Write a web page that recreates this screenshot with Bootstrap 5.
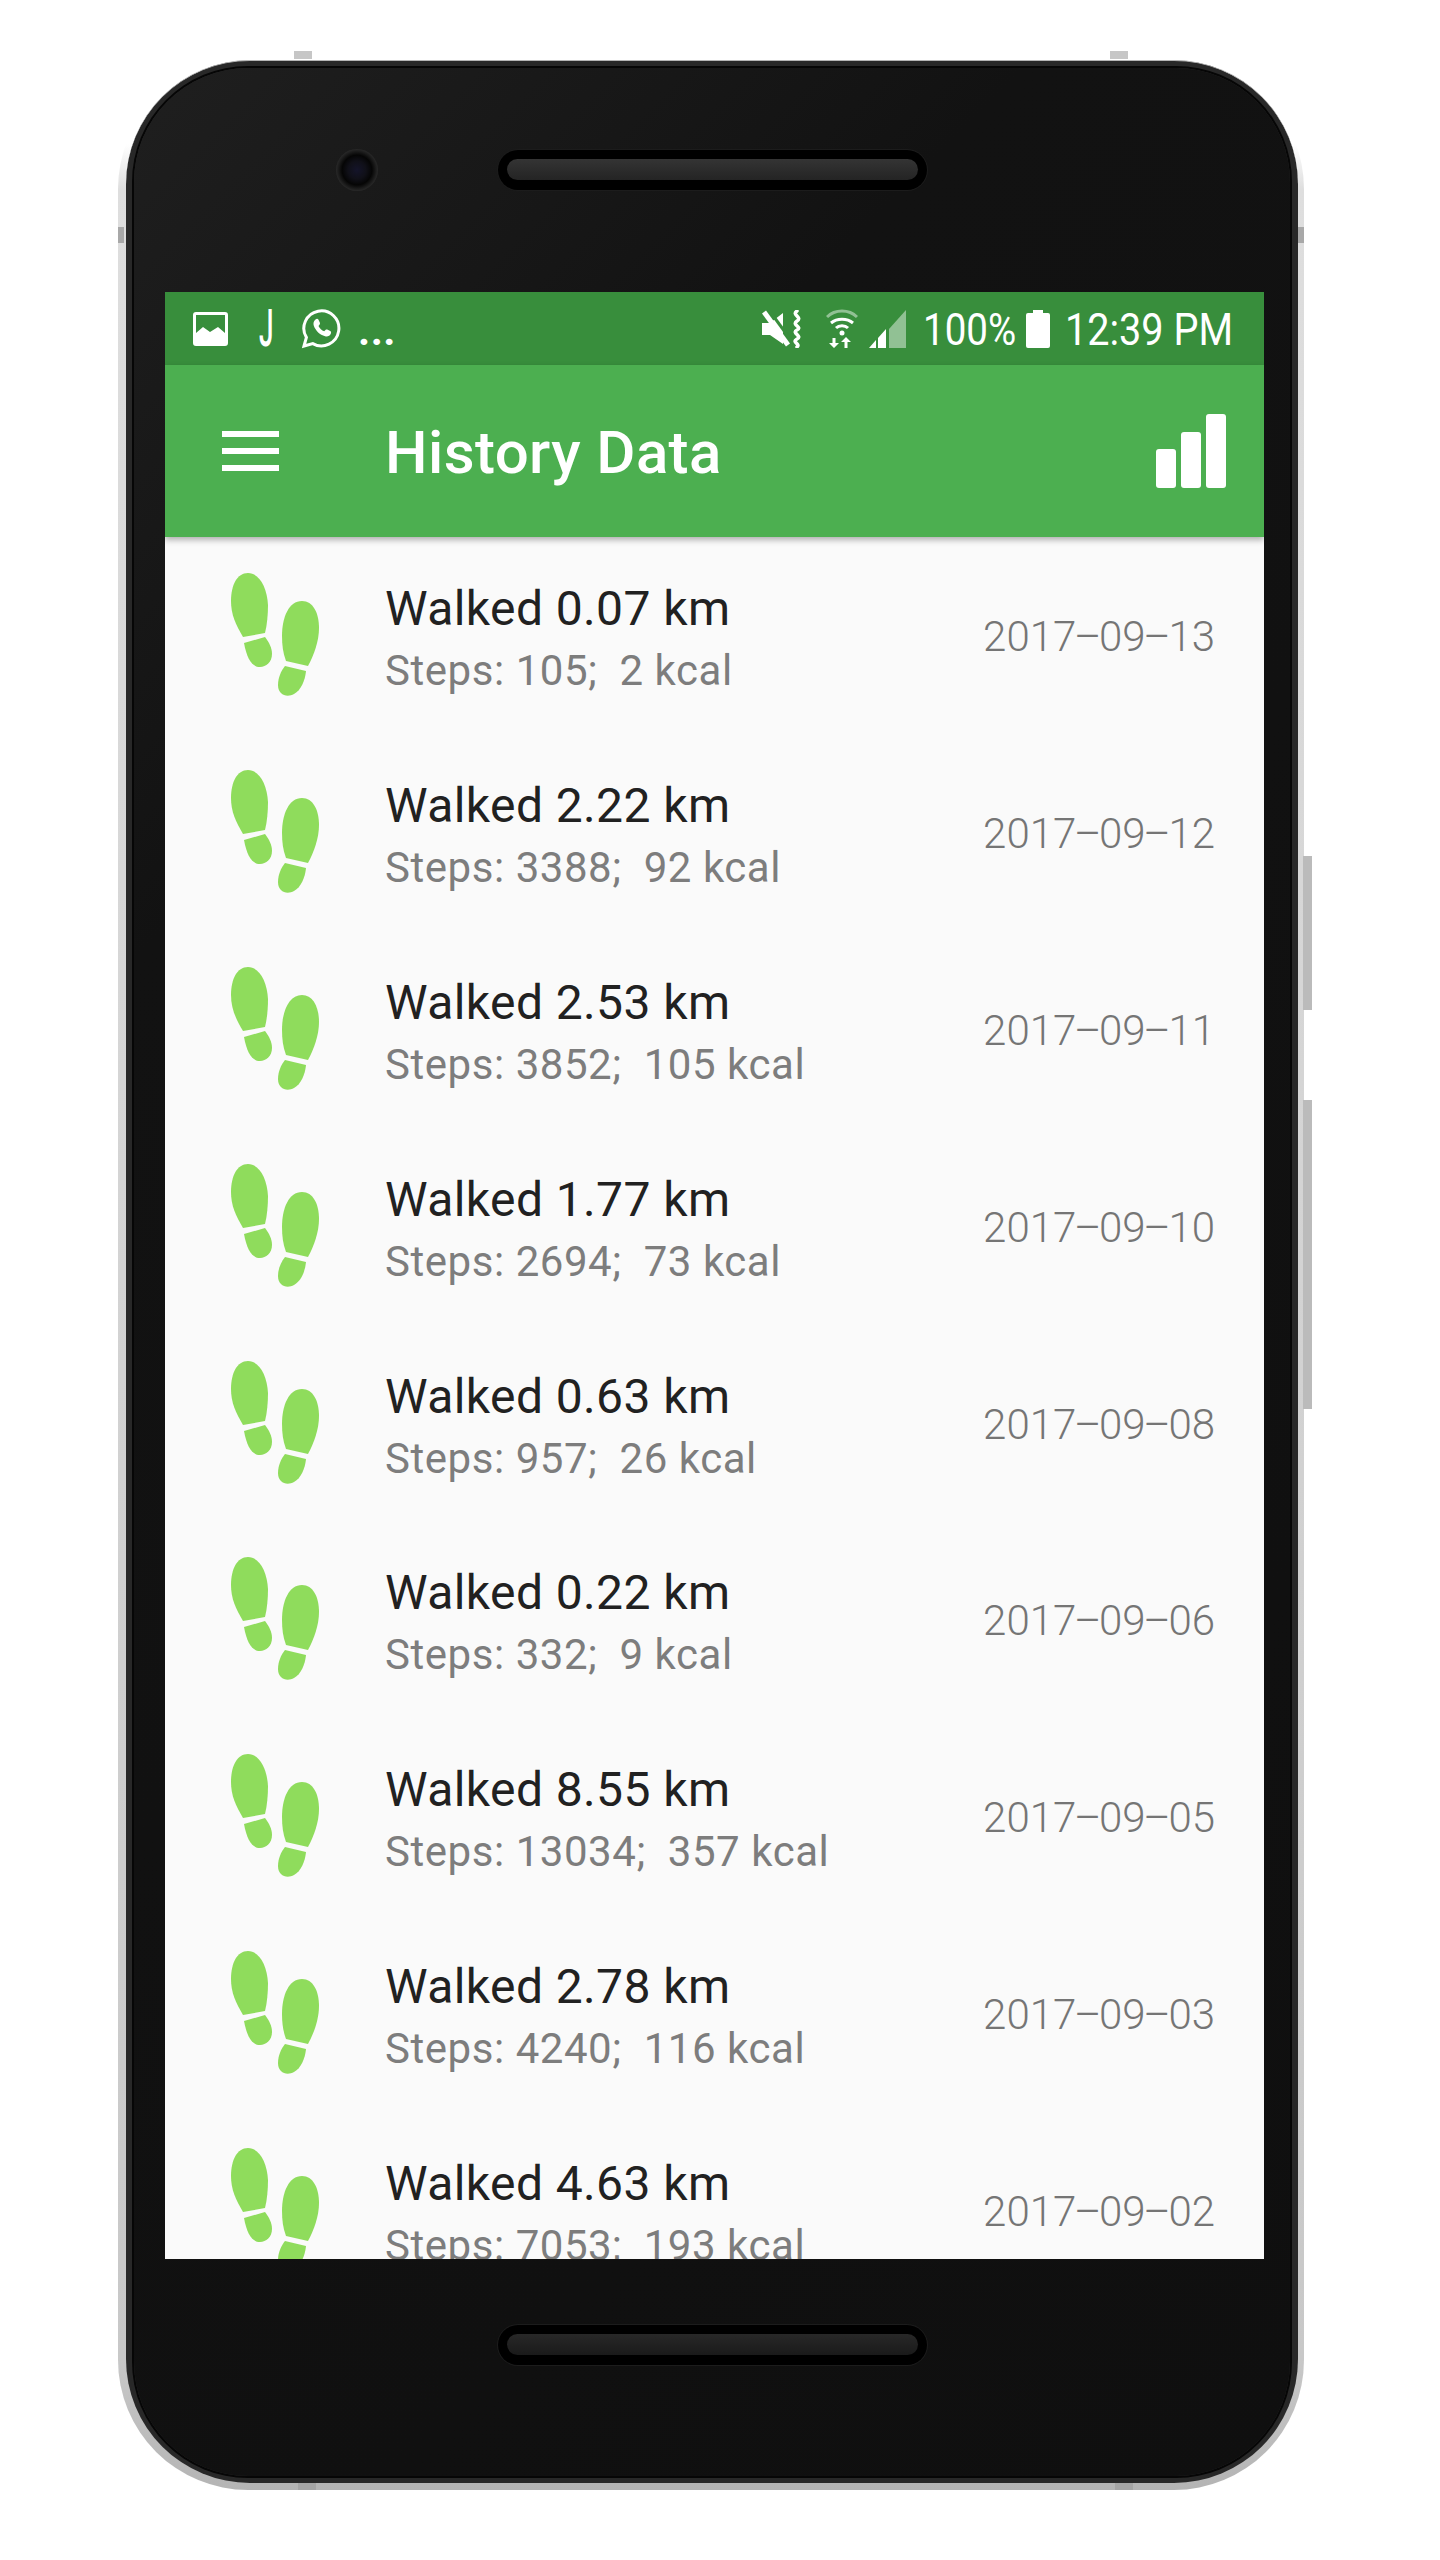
<!DOCTYPE html>
<html lang="en">
<head>
  <meta charset="UTF-8">
  <meta name="viewport" content="width=device-width, initial-scale=1.0">
  <title>History Data</title>
  <link href="https://cdn.jsdelivr.net/npm/bootstrap@5.3.0/dist/css/bootstrap.min.css" rel="stylesheet">
  <style>
    body {
      background: #fff;
      font-family: Roboto, "Liberation Sans", sans-serif;
    }
    /* phone body */
    .phone-shell {
      position: relative;
      width: 1186px;
      height: 2431px;
      margin: 59px 0 0 118px;
      padding: 1px 6px 7px 8px;
      border-radius: 130px;
      background: linear-gradient(to bottom, #fff 0, #fff 85px, #dedede 130px, #c8c8c8 2300px, #b4b4b4 100%);
    }
    .phone-rim {
      height: 100%;
      padding: 7px 8px 7px 8px;
      border-radius: 124px;
      border-top: 1px solid #b5b5b5;
      background: #282828;
    }
    .phone-face {
      height: 100%;
      padding: 0 26px 0 31px;
      border-radius: 114px;
      background: linear-gradient(135deg, #1f1f1f 0, #121212 25%, #0f0f0f 100%);
      box-shadow: 0 0 0 2px #060606;
    }
    .bezel-top { height: 224px; padding: 0 0 20px 171px; gap: 120px; }
    .bezel-bottom { height: 218px; padding: 66px 0 0 333px; }
    .camera {
      width: 42px;
      height: 42px;
      border-radius: 50%;
      background: radial-gradient(circle, #14142a 0, #101018 30%, #050505 50%, #2b2b2b 72%, #242424 100%);
    }
    .speaker {
      width: 429px;
      height: 40px;
      padding: 9px;
      border-radius: 20px;
      background: #000;
      box-shadow: 0 0 0 1px #1c1c1c;
    }
    .speaker-bar {
      height: 21px;
      border-radius: 11px;
      background: linear-gradient(to bottom, #343434, #242424);
    }
    .speaker-bar-low { background: linear-gradient(to bottom, #282828, #1a1a1a); }
    .side-key { position: absolute; background: #bbb; }
    .key-top-a { left: 176px; top: -8px; width: 18px; height: 8px; background: #c6c6c6; }
    .key-top-b { left: 992px; top: -8px; width: 18px; height: 8px; background: #c6c6c6; }
    .key-bottom-a { left: 180px; bottom: 0; width: 18px; height: 7px; background: #a5a5a5; }
    .key-bottom-b { left: 997px; bottom: 0; width: 18px; height: 7px; background: #a5a5a5; }
    .key-left { left: 0; top: 168px; width: 6px; height: 16px; background: #a8a8a8; }
    .key-right { right: 0; top: 168px; width: 6px; height: 16px; background: #a8a8a8; }
    .key-power { right: -8px; top: 797px; width: 9px; height: 154px; }
    .key-volume { right: -8px; top: 1041px; width: 9px; height: 309px; }

    /* screen */
    .screen { height: 1967px; background: #fafafa; overflow: hidden; }
    .status-strip {
      height: 73px;
      padding: 0 32px 0 28px;
      background: #388e3c;
      color: #fff;
    }
    .status-text {
      font-size: 44px;
      line-height: 1;
      display: inline-block;
      flex: none;
      white-space: nowrap;
      transform-origin: left center;
      margin-top: 3px;
    }
    .status-pct { width: 93px; margin-left: 17px; transform: scaleX(.875); }
    .status-clock { width: 167px; margin-left: 15px; transform: scaleX(.9); }
    .status-gap { margin-left: 10px; }
    .notif-j { font-size: 52px; font-weight: 500; margin: 0 30px 0 31px; width: 12px; transform: scaleX(.5); }
    .notif-dots { font-size: 42px; margin: 4px 0 0 17px; font-weight: 700; letter-spacing: .5px; line-height: 1; }
    .icon-wifi { margin: 0 11px 0 23px; }
    .app-strip {
      position: relative;
      height: 172px;
      padding: 0 38px 0 57px;
      background: #4caf50;
      color: #fff;
      box-shadow: 0 3px 6px rgba(0, 0, 0, .3);
    }
    .burger { width: 57px; margin-right: 106px; }
    .burger i { display: block; height: 6px; background: #fff; }
    .burger i + i { margin-top: 11px; }
    .app-name { font-size: 60px; font-weight: 500; letter-spacing: .4px; margin-top: 3px; }

    .walk-row {
      height: 196.8px;
      padding: 0 49px 0 66px;
    }
    .walk-row svg { flex: none; margin-right: 64px; }
    .walk-title { font-size: 48px; line-height: 56px; color: #212121; margin-top: 7px; letter-spacing: .4px; }
    .walk-sub { font-size: 42px; line-height: 50px; color: #7d7d7d; margin-top: 9px; white-space: pre; letter-spacing: .55px; }
    .walk-date { font-size: 42px; font-weight: 300; color: #757575; margin-top: 3px; }
    .date-dash { margin: 0 -2.300px; }
  </style>
</head>
<body>
  <div class="phone-shell">
    <span class="side-key key-top-a"></span>
    <span class="side-key key-top-b"></span>
    <span class="side-key key-bottom-a"></span>
    <span class="side-key key-bottom-b"></span>
    <span class="side-key key-left"></span>
    <span class="side-key key-right"></span>
    <span class="side-key key-power"></span>
    <span class="side-key key-volume"></span>

    <div class="phone-rim">
      <div class="phone-face">
        <div class="bezel-top d-flex align-items-center">
          <div class="camera"></div>
          <div class="speaker"><div class="speaker-bar"></div></div>
        </div>

        <div class="screen d-flex flex-column">
          <div class="status-strip d-flex align-items-center flex-shrink-0">
            <svg width="35" height="34" viewBox="0 0 35 34">
              <path fill="#fff" fill-rule="evenodd" d="M3 0h29a3 3 0 0 1 3 3v28a3 3 0 0 1-3 3H3a3 3 0 0 1-3-3V3a3 3 0 0 1 3-3zM3 3V21L10 15L17 20L25 15L32 21V3z"/>
            </svg>
            <span class="status-text notif-j">J</span>
            <svg width="40" height="40" viewBox="0 0 40 40">
              <path fill="none" stroke="#fff" stroke-width="3" d="M3 37l2.400-8.600A17.500 17.500 0 1 1 11.800 34.600z"/>
              <path fill="#fff" d="M14.500 10.500c1-.9 2.400-.9 3 .3l1.400 3c.3.7.1 1.300-.4 1.900l-1 1.200c1.300 2.400 3.200 4.200 5.700 5.400l1.300-1.400c.5-.5 1.100-.6 1.700-.3l3 1.500c1 .5 1.100 1.500.6 2.600-1 2.200-3.400 3.200-5.700 2.500-5.300-1.500-9.300-5.300-11.300-10.500-.8-2.400-.1-4.700 1.700-6.200z"/>
            </svg>
            <span class="notif-dots">...</span>

            <svg class="ms-auto" width="41" height="38" viewBox="0 0 41 38">
              <path fill="#fff" d="M0 13h8L21 3v31L8 25H0z"/>
              <path stroke="#388e3c" stroke-width="3" d="M7 0l24 33"/>
              <path stroke="#fff" stroke-width="5" d="M2 2l24 33"/>
              <path fill="none" stroke="#fff" stroke-width="3.500" stroke-linecap="round" d="M35 1c-6 4 6 6 0 10s6 6 0 9 6 6 0 9 4 5 0 8"/>
            </svg>
            <svg class="icon-wifi" width="32" height="39" viewBox="0 0 32 39">
              <path fill="none" stroke="#fff" stroke-opacity=".45" stroke-width="3" d="M1 8c8-8 22-8 30 0"/>
              <path fill="none" stroke="#fff" stroke-width="3" d="M5 14c6-5 16-5 22 0M10 19c3-3 9-3 12 0"/>
              <circle cx="16" cy="24" r="2.500" fill="#fff"/>
              <path fill="#fff" d="M6.500 29h3v5H13l-5 5-5-5h3.500zM20 28l5 5h-3.500v6h-3v-6H15z"/>
            </svg>
            <svg width="37" height="38" viewBox="0 0 37 38">
              <path fill="#fff" fill-opacity=".45" d="M20 19 37 0v38H20z"/>
              <path fill="#fff" d="M0 38 7 30v8zM9 28l8-9v19H9z"/>
            </svg>
            <span class="status-text status-pct">100%</span>
            <svg class="status-gap flex-shrink-0" width="24" height="38" viewBox="0 0 24 38">
              <path fill="#fff" d="M7 0h10v3h5a2 2 0 0 1 2 2v31a2 2 0 0 1-2 2H2a2 2 0 0 1-2-2V5a2 2 0 0 1 2-2h5z"/>
            </svg>
            <span class="status-text status-clock">12:39 PM</span>
          </div>

          <div class="app-strip d-flex align-items-center flex-shrink-0">
            <div class="burger"><i></i><i></i><i></i></div>
            <span class="app-name">History Data</span>
            <svg class="ms-auto" width="70" height="74" viewBox="0 0 70 74">
              <rect x="0" y="35" width="20" height="39" rx="3" fill="#fff"/>
              <rect x="25" y="18" width="20" height="56" rx="3" fill="#fff"/>
              <rect x="50" y="0" width="20" height="74" rx="3" fill="#fff"/>
            </svg>
          </div>

          <div id="walks"></div>
        </div>

        <div class="bezel-bottom">
          <div class="speaker"><div class="speaker-bar speaker-bar-low"></div></div>
        </div>
      </div>
    </div>
  </div>

  <script src="https://cdn.jsdelivr.net/npm/bootstrap@5.3.0/dist/js/bootstrap.bundle.min.js"></script>
  <script>
    const walks = [
      ['0.07', '105', '2', '2017–09–13'],
      ['2.22', '3388', '92', '2017–09–12'],
      ['2.53', '3852', '105', '2017–09–11'],
      ['1.77', '2694', '73', '2017–09–10'],
      ['0.63', '957', '26', '2017–09–08'],
      ['0.22', '332', '9', '2017–09–06'],
      ['8.55', '13034', '357', '2017–09–05'],
      ['2.78', '4240', '116', '2017–09–03'],
      ['4.63', '7053', '193', '2017–09–02']
    ];

    const feet = `<svg width="90" height="124" viewBox="0 0 90 124">
      <g fill="#8fdc5c">
        <path d="M17 0C28 0 36 14 37 32C37 42 36 52 34 60L12 64C5 52 0 42 0 28C0 12 6 0 17 0z"/>
        <path d="M13 70L34 64C38 69 41 75 41 81C41 89 35 94 29 94C21 94 16 86 13 70z"/>
        <path d="M71 28C82 28 88 40 88 55C88 68 83 82 77 93L55 88C52 80 51 72 51 63C51 44 58 28 71 28z"/>
        <path d="M54 93L75 98C74 108 70 117 63 121C56 125 47 122 47 112C47 105 50 98 54 93z"/>
      </g>
    </svg>`;

    document.getElementById('walks').innerHTML = walks.map(w => `
      <div class="walk-row d-flex align-items-center">
        ${feet}
        <div class="flex-grow-1">
          <div class="walk-title">Walked ${w[0]} km</div>
          <div class="walk-sub">Steps: ${w[1]};  ${w[2]} kcal</div>
        </div>
        <div class="walk-date">${w[3].replace(/–/g, '<span class="date-dash">–</span>')}</div>
      </div>`).join('');
  </script>
</body>
</html>
